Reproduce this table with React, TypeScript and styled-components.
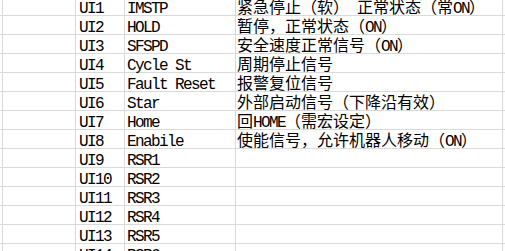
import React from "react";
import styled, { createGlobalStyle } from "styled-components";

const Global = createGlobalStyle`
  html, body {
    margin: 0;
    padding: 0;
    background: #ffffff;
    overflow: hidden;
  }
`;

const Sheet = styled.div`
  display: grid;
  grid-template-columns: 3px 73px 49px 111px 267px 1fr;
  grid-auto-rows: 19px;
  margin-top: -3px;
  width: 505px;
`;

const Cell = styled.div<{ $pad?: number }>`
  box-sizing: border-box;
  border-right: 1px solid #dadada;
  border-bottom: 1px solid #dadada;
  padding-left: ${(p) => p.$pad ?? 2}px;
  white-space: nowrap;
  overflow: visible;
  line-height: 18px;
  font-family: "Noto Sans CJK SC", "Noto Sans CJK JP", sans-serif;
  font-size: 16px;
  color: #000;
`;

const Latin = styled.span`
  font-family: "Liberation Mono", "DejaVu Sans Mono", monospace;
  font-size: 16px;
  letter-spacing: -1.6px;
`;

const rows: [string, string, string][] = [
  ["UI1", "IMSTP", "紧急停止（软） 正常状态（常ON）"],
  ["UI2", "HOLD", "暂停，正常状态（ON）"],
  ["UI3", "SFSPD", "安全速度正常信号（ON）"],
  ["UI4", "Cycle St", "周期停止信号"],
  ["UI5", "Fault Reset", "报警复位信号"],
  ["UI6", "Star", "外部启动信号（下降沿有效）"],
  ["UI7", "Home", "回HOME（需宏设定）"],
  ["UI8", "Enabile", "使能信号，允许机器人移动（ON）"],
  ["UI9", "RSR1", ""],
  ["UI10", "RSR2", ""],
  ["UI11", "RSR3", ""],
  ["UI12", "RSR4", ""],
  ["UI13", "RSR5", ""],
  ["UI14", "RSR6", ""],
];

function Text({ value }: { value: string }) {
  const parts = value.match(/[\x00-\x7F]+|[^\x00-\x7F]+/g) || [];
  return (
    <>
      {parts.map((p, i) =>
        /^[\x00-\x7F]+$/.test(p) ? <Latin key={i}>{p}</Latin> : <span key={i}>{p}</span>
      )}
    </>
  );
}

export default function App() {
  return (
    <>
      <Global />
      <Sheet>
        {rows.map(([a, b, c], i) => (
          <React.Fragment key={i}>
            <Cell />
            <Cell />
            <Cell $pad={3}>
              <Text value={a} />
            </Cell>
            <Cell $pad={2}>
              <Text value={b} />
            </Cell>
            <Cell $pad={1}>
              <Text value={c} />
            </Cell>
            <Cell />
          </React.Fragment>
        ))}
      </Sheet>
    </>
  );
}
